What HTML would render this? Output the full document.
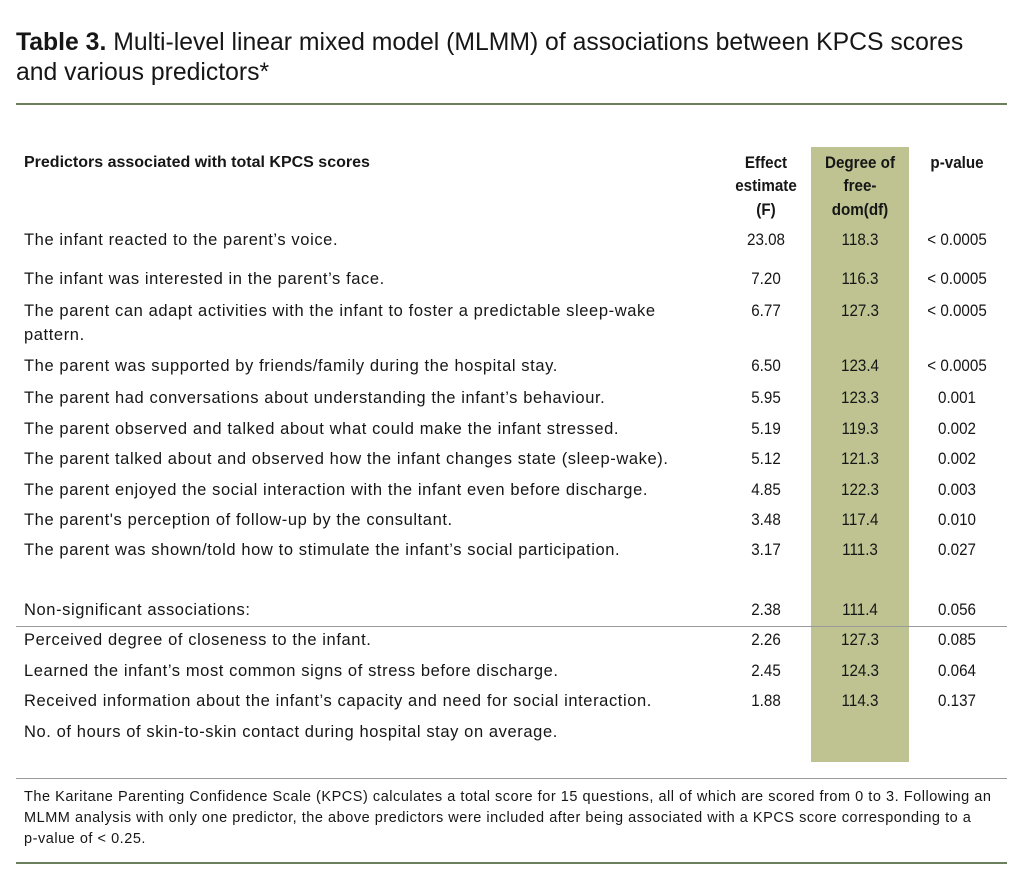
<!DOCTYPE html>
<html><head><meta charset="utf-8"><style>
body{margin:0;width:1024px;height:874px;background:#fff;position:relative;font-family:"Liberation Sans",Arial,sans-serif;color:#161616;overflow:hidden}
.t{position:absolute;white-space:nowrap;line-height:1}
.c{position:absolute;white-space:nowrap;line-height:1;text-align:center;width:120px;transform:scaleX(.92)}
.r{font-size:16.5px}
.t.r{letter-spacing:.6px}
.hl{position:absolute;left:811px;top:147px;width:98px;height:615px;background:#bec391}
.line{position:absolute;left:16px;width:991px}
</style></head><body>
<div class="t" style="left:16px;top:30px;font-size:25px;transform:scaleX(.99);transform-origin:left center"><b>Table 3.</b> Multi-level linear mixed model (MLMM) of associations between KPCS scores</div>
<div class="t" style="left:16px;top:60px;font-size:25px;transform:scaleX(.99);transform-origin:left center">and various predictors*</div>
<div class="line" style="top:103px;height:2px;background:#6b7f5c"></div>
<div class="hl"></div>
<div class="t r" style="left:24px;top:155px;letter-spacing:0;font-size:16px"><b>Predictors associated with total KPCS scores</b></div>
<div class="c r" style="left:706px;top:155px"><b>Effect</b></div>
<div class="c r" style="left:706px;top:178px"><b>estimate</b></div>
<div class="c r" style="left:706px;top:202px"><b>(F)</b></div>
<div class="c r" style="left:800px;top:155px"><b>Degree of</b></div>
<div class="c r" style="left:800px;top:178px"><b>free-</b></div>
<div class="c r" style="left:800px;top:202px"><b>dom(df)</b></div>
<div class="c r" style="left:897px;top:155px"><b>p-value</b></div>

<div class="t r" style="left:24px;top:232px">The infant reacted to the parent’s voice.</div>
<div class="t r" style="left:24px;top:271px">The infant was interested in the parent’s face.</div>
<div class="t r" style="left:24px;top:303px">The parent can adapt activities with the infant to foster a predictable sleep-wake</div>
<div class="t r" style="left:24px;top:327px">pattern.</div>
<div class="t r" style="left:24px;top:358px">The parent was supported by friends/family during the hospital stay.</div>
<div class="t r" style="left:24px;top:390px">The parent had conversations about understanding the infant’s behaviour.</div>
<div class="t r" style="left:24px;top:421px">The parent observed and talked about what could make the infant stressed.</div>
<div class="t r" style="left:24px;top:451px">The parent talked about and observed how the infant changes state (sleep-wake).</div>
<div class="t r" style="left:24px;top:482px">The parent enjoyed the social interaction with the infant even before discharge.</div>
<div class="t r" style="left:24px;top:512px">The parent's perception of follow-up by the consultant.</div>
<div class="t r" style="left:24px;top:542px">The parent was shown/told how to stimulate the infant’s social participation.</div>
<div class="t r" style="left:24px;top:602px">Non-significant associations:</div>
<div class="line" style="top:626px;height:1px;background:#999"></div>
<div class="t r" style="left:24px;top:632px">Perceived degree of closeness to the infant.</div>
<div class="t r" style="left:24px;top:663px">Learned the infant’s most common signs of stress before discharge.</div>
<div class="t r" style="left:24px;top:693px">Received information about the infant’s capacity and need for social interaction.</div>
<div class="t r" style="left:24px;top:724px">No. of hours of skin-to-skin contact during hospital stay on average.</div>

<div class="c r" style="left:706px;top:232px">23.08</div><div class="c r" style="left:800px;top:232px">118.3</div><div class="c r" style="left:897px;top:232px">&lt; 0.0005</div>
<div class="c r" style="left:706px;top:271px">7.20</div><div class="c r" style="left:800px;top:271px">116.3</div><div class="c r" style="left:897px;top:271px">&lt; 0.0005</div>
<div class="c r" style="left:706px;top:303px">6.77</div><div class="c r" style="left:800px;top:303px">127.3</div><div class="c r" style="left:897px;top:303px">&lt; 0.0005</div>
<div class="c r" style="left:706px;top:358px">6.50</div><div class="c r" style="left:800px;top:358px">123.4</div><div class="c r" style="left:897px;top:358px">&lt; 0.0005</div>
<div class="c r" style="left:706px;top:390px">5.95</div><div class="c r" style="left:800px;top:390px">123.3</div><div class="c r" style="left:897px;top:390px">0.001</div>
<div class="c r" style="left:706px;top:421px">5.19</div><div class="c r" style="left:800px;top:421px">119.3</div><div class="c r" style="left:897px;top:421px">0.002</div>
<div class="c r" style="left:706px;top:451px">5.12</div><div class="c r" style="left:800px;top:451px">121.3</div><div class="c r" style="left:897px;top:451px">0.002</div>
<div class="c r" style="left:706px;top:482px">4.85</div><div class="c r" style="left:800px;top:482px">122.3</div><div class="c r" style="left:897px;top:482px">0.003</div>
<div class="c r" style="left:706px;top:512px">3.48</div><div class="c r" style="left:800px;top:512px">117.4</div><div class="c r" style="left:897px;top:512px">0.010</div>
<div class="c r" style="left:706px;top:542px">3.17</div><div class="c r" style="left:800px;top:542px">111.3</div><div class="c r" style="left:897px;top:542px">0.027</div>
<div class="c r" style="left:706px;top:602px">2.38</div><div class="c r" style="left:800px;top:602px">111.4</div><div class="c r" style="left:897px;top:602px">0.056</div>
<div class="c r" style="left:706px;top:632px">2.26</div><div class="c r" style="left:800px;top:632px">127.3</div><div class="c r" style="left:897px;top:632px">0.085</div>
<div class="c r" style="left:706px;top:663px">2.45</div><div class="c r" style="left:800px;top:663px">124.3</div><div class="c r" style="left:897px;top:663px">0.064</div>
<div class="c r" style="left:706px;top:693px">1.88</div><div class="c r" style="left:800px;top:693px">114.3</div><div class="c r" style="left:897px;top:693px">0.137</div>

<div class="line" style="top:778px;height:1px;background:#999"></div>
<div class="t" style="left:24px;top:790px;font-size:14.5px;letter-spacing:.53px">The Karitane Parenting Confidence Scale (KPCS) calculates a total score for 15 questions, all of which are scored from 0 to 3. Following an</div>
<div class="t" style="left:24px;top:811px;font-size:14.5px;letter-spacing:.53px">MLMM analysis with only one predictor, the above predictors were included after being associated with a KPCS score corresponding to a</div>
<div class="t" style="left:24px;top:832px;font-size:14.5px;letter-spacing:.53px">p-value of &lt; 0.25.</div>
<div class="line" style="top:862px;height:2px;background:#6b7f5c"></div>
</body></html>
